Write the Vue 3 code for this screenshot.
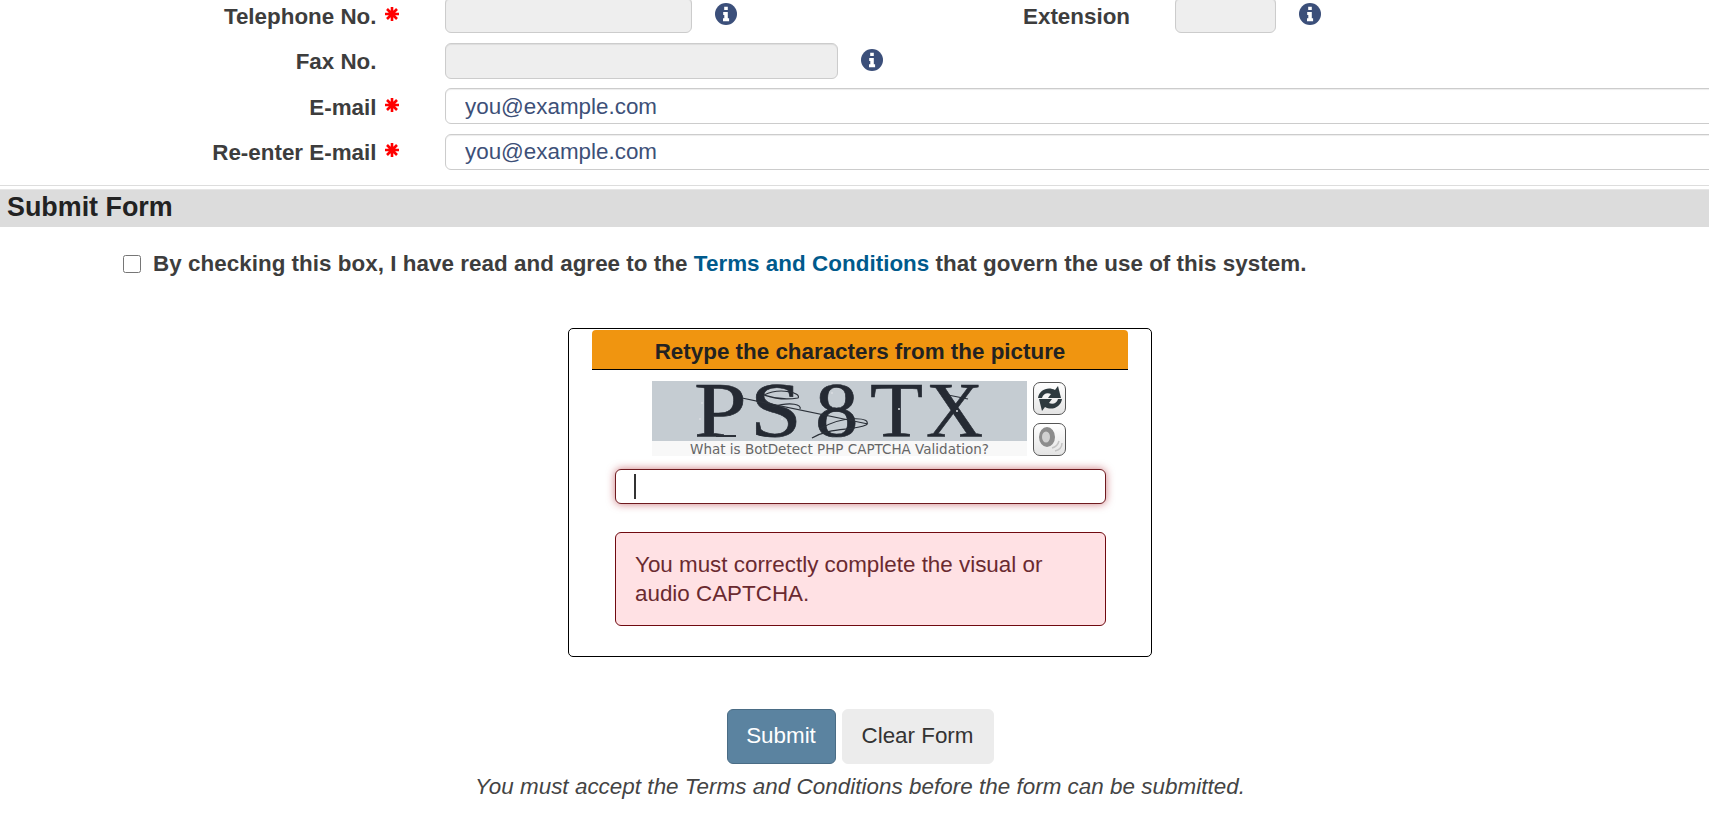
<script setup>
const rows = [
  { label: "Fax No.", type: "fax" },
  { label: "E-mail", type: "mail", required: true },
  { label: "Re-enter E-mail", type: "mail", required: true },
];
</script>

<template>
  <div class="page">
    <div class="contact">
      <div class="row">
        <label class="label">Telephone No.</label>
        <span class="star">
          <svg viewBox="0 0 14 14" width="14" height="14"><path d="M7 0v14M0 7h14M2 2l10 10M12 2L2 12" /></svg>
        </span>
        <input class="input disabled phone" disabled />
        <svg class="info" viewBox="0 0 22 22"><circle cx="11" cy="11" r="11" /><path d="M9.2 3.8h3.6v3.1H9.2zM8.2 9h4.6v6.2h1.3v3H8v-3h1.3v-3.2H8.2z" fill="#fff" /></svg>
        <label class="label ext-label">Extension</label>
        <input class="input disabled ext" disabled />
        <svg class="info" viewBox="0 0 22 22"><circle cx="11" cy="11" r="11" /><path d="M9.2 3.8h3.6v3.1H9.2zM8.2 9h4.6v6.2h1.3v3H8v-3h1.3v-3.2H8.2z" fill="#fff" /></svg>
      </div>
      <div class="row" v-for="row in rows" :key="row.label">
        <label class="label">{{ row.label }}</label>
        <span class="star">
          <svg v-if="row.required" viewBox="0 0 14 14" width="14" height="14"><path d="M7 0v14M0 7h14M2 2l10 10M12 2L2 12" /></svg>
        </span>
        <template v-if="row.type === 'fax'">
          <input class="input disabled fax" disabled />
          <svg class="info" viewBox="0 0 22 22"><circle cx="11" cy="11" r="11" /><path d="M9.2 3.8h3.6v3.1H9.2zM8.2 9h4.6v6.2h1.3v3H8v-3h1.3v-3.2H8.2z" fill="#fff" /></svg>
        </template>
        <input v-else class="input mail" placeholder="you@example.com" />
      </div>
    </div>

    <hr class="rule" />
    <h2 class="bar">Submit Form</h2>

    <div class="terms">
      <input type="checkbox" class="check" />
      <span>By checking this box, I have read and agree to the <a href="#" class="link">Terms and Conditions</a> that govern the use of this system.</span>
    </div>

    <div class="center">
      <div class="captcha">
        <div class="captcha-head">Retype the characters from the picture</div>
        <div class="captcha-body">
          <div class="picture">
            <svg class="letters" viewBox="0 0 375 60" width="375" height="60">
              <rect width="375" height="60" fill="#c5ccd2" />
              <g font-family="Liberation Serif, serif" font-size="79" fill="#252a33" stroke="#252a33" stroke-width="0.6">
                <text transform="translate(42 55) scale(1.2 1)">P</text>
                <text transform="translate(98 55) scale(1.18 1)">S</text>
                <text transform="translate(163 55) scale(1.1 1)">8</text>
                <text transform="translate(218 55) scale(1.1 1)">T</text>
                <text transform="translate(274 55) scale(1 1)">X</text>
              </g>
              <g fill="none" stroke="#2b3038" stroke-width="1.2">
                <path d="M90 17 L216 43" />
                <path d="M112 14 C128 6 150 12 146 17 C128 20 118 16 112 14" />
                <path d="M120 26 C140 20 150 24 148 28" />
                <path d="M168 48 C190 34 222 36 214 44 C200 50 178 46 160 57" />
                <path d="M64 55 H84" stroke-width="2" />
                <path d="M296 14 L316 18" />
              </g>
              <g fill="#d8dde1">
                <circle cx="50" cy="22" r="1" />
                <circle cx="48" cy="38" r="1" />
                <circle cx="130" cy="38" r="1" />
                <circle cx="180" cy="12" r="1" />
                <circle cx="247" cy="28" r="1" />
                <circle cx="305" cy="30" r="1" />
              </g>
            </svg>
            <a href="#" class="what">What is BotDetect PHP CAPTCHA Validation?</a>
          </div>
          <div class="tools">
            <button class="tool" type="button">
              <svg viewBox="0 0 30 31" width="30" height="31">
                <path d="M3 15 C4 7 13 3 20 7 L23 3 L26 15 L13 15 L16 11 C12 9 8 11 7 15 Z" fill="#2e3a3f" />
                <path d="M27 16 C26 24 17 28 10 24 L7 28 L4 16 L17 16 L14 20 C18 22 22 20 23 16 Z" fill="#2e3a3f" />
              </svg>
            </button>
            <button class="tool" type="button">
              <svg viewBox="0 0 30 31" width="30" height="31">
                <ellipse cx="12" cy="13" rx="8" ry="10" fill="#8c8c8c" />
                <ellipse cx="11" cy="13" rx="4" ry="5.5" fill="#d0d0d0" />
                <path d="M17 24 C21 23 23 21 24 17 M20 27 C24 26 27 23 27 19" fill="none" stroke="#c4c4c4" stroke-width="1.5" />
              </svg>
            </button>
          </div>
        </div>
        <div class="code-wrap">
          <input class="code" />
          <span class="caret"></span>
        </div>
        <div class="alert">You must correctly complete the visual or audio CAPTCHA.</div>
      </div>

      <div class="actions">
        <button class="btn submit" type="button">Submit</button>
        <button class="btn clear" type="button">Clear Form</button>
      </div>
      <p class="note">You must accept the Terms and Conditions before the form can be submitted.</p>
    </div>
  </div>
</template>

<style scoped>
.page {
  margin-top: -3px;
  font-family: "Liberation Sans", Arial, sans-serif;
  font-size: 22.4px;
  color: #3d3d3d;
  overflow: hidden;
}
.contact {
  display: flex;
  flex-direction: column;
  gap: 9.6px;
  padding-left: 100px;
}
.row {
  display: flex;
  align-items: center;
  height: 36px;
}
.label {
  width: 276.5px;
  padding-top: 3px;
  text-align: right;
  font-weight: 700;
  flex: none;
}
.star {
  width: 68.5px;
  padding-left: 8.5px;
  box-sizing: border-box;
  flex: none;
  display: flex;
  align-items: center;
  margin-bottom: 3px;
}
.star path {
  fill: none;
  stroke: #f00;
  stroke-width: 2.6;
}
.input {
  box-sizing: border-box;
  height: 36px;
  border: 1px solid #ccc;
  border-radius: 6px;
  box-shadow: inset 0 1px 1px rgba(0, 0, 0, 0.075);
  padding: 1px 19px 0;
  font: inherit;
  font-weight: 400;
  flex: none;
}
.input::placeholder {
  color: #3d5078;
  opacity: 1;
}
.disabled {
  background: #eee;
}
.phone {
  width: 247px;
}
.fax {
  width: 393px;
}
.ext {
  width: 101px;
}
.mail {
  width: 1400px;
}
.info {
  width: 22px;
  height: 22px;
  margin-left: 23px;
  margin-bottom: 2px;
  flex: none;
  fill: #3b4f7a;
}
.ext-label {
  width: auto;
  margin-left: 286px;
  margin-right: 45px;
}
.rule {
  margin: 15px 0 0;
  height: 3px;
  border: 0;
  border-top: 1px solid #ddd;
  border-bottom: 1px solid #e6e6e6;
}
.bar {
  margin: 0;
  background: #dcdcdc;
  color: #222;
  font-size: 26.88px;
  line-height: 35px;
  padding: 0 0 2px 7px;
}
.terms {
  display: flex;
  align-items: center;
  gap: 12px;
  margin-top: 23px;
  padding-left: 123px;
  font-weight: 700;
  height: 28px;
  letter-spacing: 0.04px;
}
.check {
  width: 18px;
  height: 18px;
  margin: 0;
  flex: none;
}
.link {
  color: #005a8c;
  text-decoration: none;
}
.center {
  display: flex;
  flex-direction: column;
  align-items: center;
  padding-left: 11px;
}
.captcha {
  box-sizing: border-box;
  width: 584px;
  height: 329px;
  margin-top: 50px;
  border: 1px solid #000;
  border-radius: 5px;
  padding: 1px 23px 0;
}
.captcha-head {
  height: 40px;
  box-sizing: border-box;
  border-bottom: 1px solid #000;
  border-radius: 4px 4px 0 0;
  background: #f09510;
  color: #222;
  font-weight: 700;
  font-size: 22.4px;
  padding-top: 4px;
  line-height: 36px;
  text-align: center;
}
.captcha-body {
  display: flex;
  justify-content: center;
  gap: 6px;
  margin-top: 11px;
  margin-left: -2px;
}
.picture {
  width: 375px;
  display: flex;
  flex-direction: column;
  background: #f8f8f8;
}
.letters {
  display: block;
  overflow: visible;
}
.what {
  display: block;
  height: 15px;
  font-family: "DejaVu Sans", sans-serif;
  font-size: 13.5px;
  line-height: 16px;
  color: #666;
  text-align: center;
  text-decoration: none;
  white-space: nowrap;
}
.tools {
  display: flex;
  flex-direction: column;
  gap: 8px;
  padding-top: 1px;
}
.tool {
  box-sizing: border-box;
  width: 33px;
  height: 33px;
  padding: 0;
  border: 1.5px solid #555;
  border-radius: 7px;
  background: linear-gradient(#fff, #e4e4e4);
  display: flex;
  align-items: center;
  justify-content: center;
}
.code-wrap {
  position: relative;
  margin: 13px 22px 0 23px;
}
.code {
  box-sizing: border-box;
  display: block;
  width: 100%;
  height: 35px;
  border: 1px solid #6f1a1f;
  border-radius: 6px;
  box-shadow: 0 0 8px rgba(170, 30, 40, 0.6);
  outline: none;
}
.caret {
  position: absolute;
  left: 19px;
  top: 5px;
  width: 2px;
  height: 25px;
  background: #333;
}
.alert {
  box-sizing: border-box;
  height: 94px;
  margin: 28px 22px 0 23px;
  padding: 17px 19px;
  border: 1px solid #700a10;
  border-radius: 6px;
  background: #ffe1e4;
  color: #6a2a30;
  line-height: 29px;
}
.actions {
  display: flex;
  gap: 6px;
  margin-top: 52px;
}
.btn {
  box-sizing: border-box;
  height: 55px;
  border-radius: 6px;
  font: inherit;
  padding: 0;
}
.submit {
  width: 109px;
  background: #5b83a0;
  border: 1px solid #4a6c85;
  color: #fff;
}
.clear {
  width: 152px;
  background: #ececec;
  border: 1px solid #ececec;
  color: #333;
}
.note {
  margin: 10px 0 0;
  font-style: italic;
  line-height: 26px;
  color: #444;
  letter-spacing: 0.04px;
}
</style>

<style>
html,
body {
  overflow: hidden;
  background: #fff;
}
</style>
